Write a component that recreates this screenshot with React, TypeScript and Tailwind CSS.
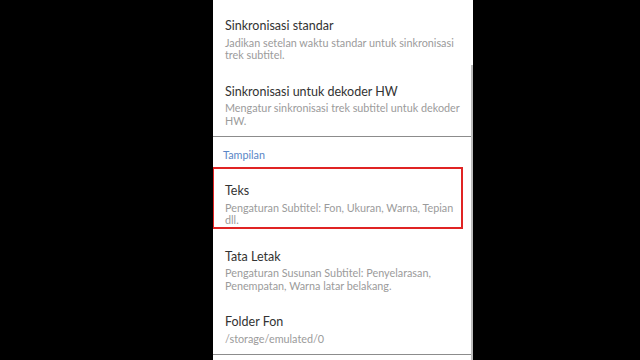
import React from "react";

type Item = { title: string; lines: string[]; highlight?: boolean };

const font = { fontFamily: "Lato, 'Noto Sans', sans-serif" };

function Row({ title, lines, highlight }: Item) {
  return (
    <div className="relative pl-3 pr-3 pt-[12px] pb-[9px]">
      <div className="text-[12.5px] leading-[18px] text-[#333333] whitespace-nowrap">{title}</div>
      <div className="mt-[1.5px]">
        {lines.map((l) => (
          <div key={l} className="text-[10.8px] leading-[12.5px] text-[#9b9b9b] whitespace-nowrap">
            {l}
          </div>
        ))}
      </div>
      {/* red annotation box */}
      {highlight && (
        <div className="absolute -left-px -top-[3px] right-[10px] bottom-[7px] border-2 border-[#e02424]" />
      )}
    </div>
  );
}

export default function App() {
  return (
    <div className="w-[640px] h-[360px] bg-black overflow-hidden flex" style={font}>
      <div className="ml-[213px] w-[260px] h-full bg-white relative overflow-hidden">
        <div className="pt-[5px]">
          <Row
            title="Sinkronisasi standar"
            lines={["Jadikan setelan waktu standar untuk sinkronisasi", "trek subtitel."]}
          />
          <Row
            title="Sinkronisasi untuk dekoder HW"
            lines={["Mengatur sinkronisasi trek subtitel untuk dekoder", "HW."]}
          />
        </div>
        <div className="h-px bg-[#8c8c8c]" />
        <div className="pl-[10px] pt-[11px] pb-[8px] text-[10.8px] leading-[14px] text-[#5a86c6]">
          Tampilan
        </div>
        <Row
          title="Teks"
          lines={["Pengaturan Subtitel: Fon, Ukuran, Warna, Tepian", "dll."]}
          highlight
        />
        <Row
          title="Tata Letak"
          lines={["Pengaturan Susunan Subtitel: Penyelarasan,", "Penempatan, Warna latar belakang."]}
        />
        <Row title="Folder Fon" lines={["/storage/emulated/0"]} />
        <div className="h-px bg-[#8c8c8c]" />
        {/* scrollbar */}
        <div className="absolute right-0 top-[65px] bottom-0 w-[2px] bg-[#bdbdbd]" />
      </div>
    </div>
  );
}
